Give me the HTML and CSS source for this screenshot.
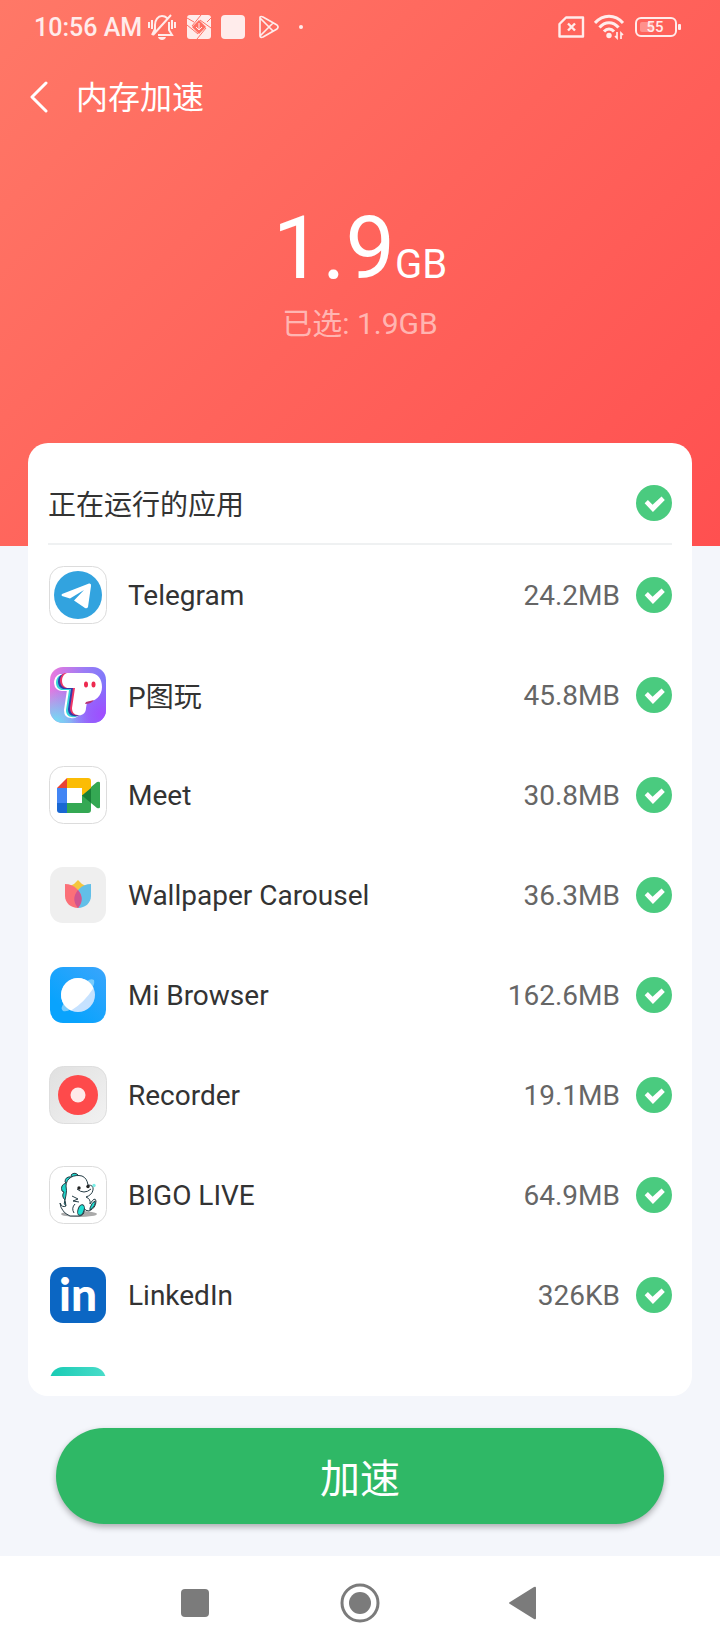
FILE: index.html
```html
<!DOCTYPE html>
<html lang="zh-CN">
<head>
    <meta charset="UTF-8">
    <meta name="viewport" content="width=device-width, initial-scale=1.0">
    <title>内存加速</title>
    <link rel="stylesheet" href="styles.css">
</head>
<body>
    <header class="hero">
        <!-- Status bar -->
        <div class="statusBar">
            <span class="clock">10:56 AM</span>
            <div class="notifications">
                <svg width="30" height="28" viewBox="0 0 30 28" fill="none" stroke="currentColor" stroke-width="2">
                    <path d="M8 19V12C8 7 11 3 15 3C17 3 19 4 20 5M22 9V17L25 22H11M6 22L24 2M8 16L5 22"/>
                    <path d="M2 9V15M5 7V16M25 7V16M28 9V15"/>
                    <path d="M11 24H19C18 28 12 28 11 24Z" fill="currentColor" stroke="none"/>
                </svg>
                <svg width="24" height="24" viewBox="0 0 24 24">
                    <rect width="24" height="24" rx="3" fill="currentColor"/>
                    <path class="cutout" d="M12 5L19 12L12 19L5 12Z"/>
                    <path class="cutoutLine" d="M14 0L5 11M24 13L13 5M10 24L19 13M0 10L11 19M0 3L7 7M24 3L20 7"/>
                    <path d="M12 8V15M9 12L12 15L15 12" fill="none" stroke="currentColor" stroke-width="1"/>
                </svg>
                <svg width="24" height="24" viewBox="0 0 24 24" fill="currentColor"><rect width="24" height="24" rx="4"/></svg>
                <svg width="24" height="24" viewBox="0 0 24 24" fill="none" stroke="currentColor" stroke-width="1.7" stroke-linejoin="round">
                    <path d="M5 2Q6 1 8 2L22 10Q24 12 22 14L8 22Q5 23 5 21ZM5 3L18 16M5 21L18 8M18 8L14 12L18 16"/>
                </svg>
                <svg width="24" height="24" viewBox="0 0 24 24" fill="currentColor"><circle cx="12" cy="12" r="2"/></svg>
            </div>
            <div class="signals">
                <svg width="28" height="24" viewBox="0 0 28 24" fill="none" stroke="currentColor" stroke-width="2.4" stroke-linejoin="round">
                    <path d="M9 2.500H26V21.500H2.500V9ZM11 8.500L18 15.500M18 8.500L11 15.500"/>
                </svg>
                <svg width="32" height="26" viewBox="0 0 32 26" fill="none" stroke="currentColor" stroke-width="3">
                    <path d="M1 9C9 0 21 0 29 9M5.500 13.500C11 7 19 7 24.500 13.500M10 17.500C13 14 17 14 20 17.500"/>
                    <circle cx="15" cy="21.500" r="2.700" fill="currentColor" stroke="none"/>
                    <path d="M23 18V24L21 22M27 25V19L29 21" stroke-width="1.700"/>
                </svg>
                <svg width="46" height="24" viewBox="0 0 46 24">
                    <rect x="1" y="3" width="40" height="18" rx="5" fill="none" stroke="currentColor" stroke-width="2"/>
                    <rect x="5" y="7" width="13" height="10" rx="2" fill="currentColor" opacity=".35"/>
                    <rect x="43" y="9" width="3" height="6" rx="1" fill="currentColor"/>
                    <text class="batteryText" x="20" y="17" text-anchor="middle">55</text>
                </svg>
            </div>
        </div>

        <div class="titleBar">
            <button class="backBtn" aria-label="返回">
                <svg width="20" height="34" viewBox="0 0 20 34" fill="none" stroke="currentColor" stroke-width="3" stroke-linecap="round" stroke-linejoin="round"><path d="M16 3L2 17L16 31"/></svg>
            </button>
            <h1>内存加速</h1>
        </div>

        <div class="total">1.9<span class="unit">GB</span></div>
        <div class="selected">已选: 1.9GB</div>
    </header>

    <main class="card">
        <label class="cardHead">
            <span class="name">正在运行的应用</span>
            <input type="checkbox" class="check" checked>
        </label>

        <ul class="appList">
            <li><label class="app">
                <svg class="appIcon" viewBox="0 0 60 60">
                    <rect class="outline" x="1.500" y="1.500" width="57" height="57" rx="14"/>
                    <circle cx="30" cy="30" r="24" fill="#32a3df"/>
                    <path d="M14 29L41 18.500Q43.500 18 43 21L40 42Q39 44 37 43L26 35.500L36 25L22 33.500L14 31Q13 30 14 29Z" fill="#fff"/>
                </svg>
                <span class="name">Telegram</span>
                <span class="size">24.2MB</span>
                <input type="checkbox" class="check" checked>
            </label></li>
            <li><label class="app">
                <svg class="appIcon" viewBox="0 0 60 60">
                    <defs>
                        <linearGradient id="pFill" x1="0" y1="0" x2="1" y2="0.2"><stop offset="0" stop-color="#ee78dc"/><stop offset="0.6" stop-color="#9b7cf5"/><stop offset="1" stop-color="#7f78fa"/></linearGradient>
                        <radialGradient id="pCyan" cx="0.1" cy="1" r="0.6"><stop offset="0" stop-color="#6fe0f5"/><stop offset="1" stop-color="#6fe0f5" stop-opacity="0"/></radialGradient>
                        <radialGradient id="pViolet" cx="0.95" cy="0.85" r="0.6"><stop offset="0" stop-color="#a14dff"/><stop offset="1" stop-color="#a14dff" stop-opacity="0"/></radialGradient>
                        <path id="pBody" d="M17 8H39C48 8 52 14 52 22C52 30 46 37 37 37L36 43C36 49 31 51 28 50C24 50 22 47 22 43L25 23H20C10 24 10 10 17 8Z"/>
                    </defs>
                    <rect x="2" y="2" width="56" height="56" rx="13" fill="url(#pFill)"/>
                    <rect x="2" y="2" width="56" height="56" rx="13" fill="url(#pCyan)"/>
                    <rect x="2" y="2" width="56" height="56" rx="13" fill="url(#pViolet)"/>
                    <use href="#pBody" x="-5" y="2" fill="#fff" stroke="#fff" stroke-width="2"/>
                    <use href="#pBody" x="-4" y="2" fill="#35d6d9"/>
                    <use href="#pBody" x="-2" y="1" fill="#3439a8"/>
                    <use href="#pBody" fill="#ee3565"/>
                    <use href="#pBody" x="2" fill="#fff"/>
                    <path d="M38 37L46 35Q43 39 37 39Z" fill="#b63377"/>
                    <ellipse cx="38" cy="19.500" rx="2" ry="3" fill="#ed294f"/>
                    <ellipse cx="45.500" cy="19.500" rx="2" ry="3" fill="#ed294f"/>
                </svg>
                <span class="name">P图玩</span>
                <span class="size">45.8MB</span>
                <input type="checkbox" class="check" checked>
            </label></li>
            <li><label class="app">
                <svg class="appIcon" viewBox="0 0 60 60">
                    <rect class="outline" x="1.500" y="1.500" width="57" height="57" rx="14"/>
                    <path d="M9 23L19 13V23Z" fill="#e94335"/>
                    <path d="M19 13H40Q43 13 43 16V31H34V23H19Z" fill="#fbbc05"/>
                    <path d="M9 23H19V38H9Z" fill="#4285f4"/>
                    <path d="M9 38H19V48H12Q9 48 9 45Z" fill="#1967d2"/>
                    <path d="M19 38H34V30H43V45Q43 48 40 48H19ZM43 22L49 17Q52 16 52 18V42Q52 44 49 43L43 38Z" fill="#34a853"/>
                    <path d="M34 30.500L43 23V38Z" fill="#188038"/>
                </svg>
                <span class="name">Meet</span>
                <span class="size">30.8MB</span>
                <input type="checkbox" class="check" checked>
            </label></li>
            <li><label class="app">
                <svg class="appIcon" viewBox="0 0 60 60">
                    <rect x="2" y="2" width="56" height="56" rx="13" fill="#efefef"/>
                    <path d="M22 21Q27 19 30 15Q33 19 38 21L30 29Z" fill="#f4c63c"/>
                    <path d="M43 19V31C43 38 37 43 30 43C25 36 26 29 31 24Q36 19 43 19Z" fill="#62bfe8"/>
                    <path d="M17 19V31C17 38 23 43 30 43C35 36 34 29 29 24Q24 19 17 19Z" fill="#fb7078"/>
                    <path d="M30 25C25 31 25 37 30 43C35 37 35 31 30 25Z" fill="#d05590"/>
                </svg>
                <span class="name">Wallpaper Carousel</span>
                <span class="size">36.3MB</span>
                <input type="checkbox" class="check" checked>
            </label></li>
            <li><label class="app">
                <svg class="appIcon" viewBox="0 0 60 60">
                    <defs><linearGradient id="browserFill" x1="1" y1="0" x2="0.3" y2="0.8"><stop offset="0" stop-color="#3aa5fc"/><stop offset="1" stop-color="#09a3fd"/></linearGradient></defs>
                    <rect x="2" y="2" width="56" height="56" rx="13" fill="url(#browserFill)"/>
                    <path d="M39 16Q43 13 46 15Q47 19 44 23ZM16 38Q12 43 15 46Q19 47 23 44Z" fill="#79ccfd"/>
                    <circle cx="30" cy="30" r="17" fill="#c6e2ff"/>
                    <path d="M23 45.500A17 17 0 1 1 45.500 23Q36 38 23 45.500Z" fill="#fff"/>
                </svg>
                <span class="name">Mi Browser</span>
                <span class="size">162.6MB</span>
                <input type="checkbox" class="check" checked>
            </label></li>
            <li><label class="app">
                <svg class="appIcon" viewBox="0 0 60 60">
                    <defs><linearGradient id="recFill" x1="0" y1="0" x2="1" y2="1"><stop offset="0" stop-color="#e0e0e0"/><stop offset="1" stop-color="#f2f2f2"/></linearGradient></defs>
                    <rect x="1.500" y="1.500" width="57" height="57" rx="14" fill="url(#recFill)" stroke="#dedede"/>
                    <circle cx="30" cy="30" r="20" fill="#fe4a4b"/>
                    <circle cx="30" cy="30" r="7.500" fill="#ffe9e9"/>
                </svg>
                <span class="name">Recorder</span>
                <span class="size">19.1MB</span>
                <input type="checkbox" class="check" checked>
            </label></li>
            <li><label class="app">
                <svg class="appIcon" viewBox="0 0 60 60">
                    <rect class="outline" x="1.500" y="1.500" width="57" height="57" rx="14"/>
                    <ellipse cx="31" cy="49" rx="18" ry="3" fill="#aaa"/>
                    <g stroke="#263d46" stroke-width="1">
                        <path d="M31 11Q27 6 23 10L24 12Q17 11 17 17L18 18Q12 20 14 26L16 27Q13 31 17 35Q15 39 18 41L22 30L21 18Z" fill="#1fd3c8"/>
                        <path d="M12 38Q14 43 18 41Q16 35 18 30Q19 26 18 21C18 13 26 9 34 11Q39 13 40 20Q46 20 45 25Q44 30 38 32Q43 34 42 39Q47 31 48 36Q48 43 41 46Q37 46 36 43Q37 51 31 51H22Q13 47 12 38Z" fill="#fff"/>
                        <path d="M29 24Q36 30 43 24M24 31L30 34L25 36L31 37M26 48Q23 43 27 39" fill="none"/>
                        <ellipse cx="33" cy="45" rx="3" ry="5.500" transform="rotate(18 33 45)" fill="#1fe0d4"/>
                        <path d="M42 43Q44 37 47 36Q48 41 42 45Z" fill="#1fe0d4"/>
                    </g>
                    <circle cx="31" cy="23" r="1.700" fill="#222"/>
                    <circle cx="40" cy="21.500" r="1.700" fill="#222"/>
                    <circle cx="46" cy="20.500" r="1.700" fill="#79eee7"/>
                </svg>
                <span class="name">BIGO LIVE</span>
                <span class="size">64.9MB</span>
                <input type="checkbox" class="check" checked>
            </label></li>
            <li><label class="app">
                <svg class="appIcon" viewBox="0 0 60 60">
                    <rect x="2" y="2" width="56" height="56" rx="13" fill="#0b66c3"/>
                    <text class="linkedinText" x="30" y="46" text-anchor="middle">in</text>
                </svg>
                <span class="name">LinkedIn</span>
                <span class="size">326KB</span>
                <input type="checkbox" class="check" checked>
            </label></li>
            <li><div class="app">
                <svg class="appIcon" viewBox="0 0 60 60">
                    <defs><linearGradient id="nextFill"><stop offset="0" stop-color="#18cbb4"/><stop offset="1" stop-color="#49dcc9"/></linearGradient></defs>
                    <rect x="2" y="2" width="56" height="56" rx="13" fill="url(#nextFill)"/>
                </svg>
            </div></li>
        </ul>
    </main>

    <button class="boostBtn">加速</button>

    <!-- System navigation -->
    <nav class="navBar">
        <button aria-label="最近任务"><svg width="40" height="40" viewBox="0 0 40 40" fill="currentColor"><rect x="6" y="6" width="28" height="28" rx="4"/></svg></button>
        <button aria-label="主页"><svg width="40" height="40" viewBox="0 0 40 40" fill="currentColor"><circle cx="20" cy="20" r="18" fill="none" stroke="currentColor" stroke-width="3"/><circle cx="20" cy="20" r="11"/></svg></button>
        <button aria-label="返回"><svg width="40" height="40" viewBox="0 0 40 40" fill="currentColor"><path d="M5 19L29 4Q31 3 31 5V35Q31 37 29 36L5 21Q3 20 5 19Z"/></svg></button>
    </nav>
</body>
</html>
```
FILE: styles.css
```css
* {
    box-sizing: border-box;
}

body {
    margin: 0;
    height: 100vh;
    display: flex;
    flex-direction: column;
    background-color: #f4f6fb;
    font-family: Roboto, "Noto Sans CJK SC", sans-serif;
    color: #333;
}

button {
    border: none;
    padding: 0;
    background: none;
    color: inherit;
    font-family: inherit;
    cursor: pointer;
}

svg {
    display: block;
    flex: none;
}

/* Red top area, the card overlaps its lower part */
.hero {
    flex: none;
    padding-bottom: 202px;
    background: linear-gradient(135deg, #ff7867 0%, #ff635b 50%, #ff5050 100%);
    color: white;
    text-align: center;
}

.statusBar {
    display: flex;
    align-items: center;
    height: 54px;
    padding: 0 39px 0 34px;
    color: #ffeceb;
}

.clock {
    font-size: 25px;
    font-weight: 500;
}

.notifications {
    display: flex;
    align-items: center;
    gap: 10px;
    margin-left: 5px;
}

.cutout {
    fill: #ff6f63;
}

.cutoutLine {
    fill: none;
    stroke: #ff6f63;
    stroke-width: 1px;
}

.signals {
    display: flex;
    align-items: center;
    gap: 9px;
    margin-left: auto;
}

.batteryText {
    font-size: 15px;
    font-weight: 500;
    fill: currentColor;
}

.titleBar {
    display: flex;
    align-items: center;
    height: 86px;
    padding: 0 30px;
    gap: 26px;
}

h1 {
    margin: 0;
    padding-bottom: 4px;
    font-size: 32px;
    font-weight: 400;
}

.total {
    margin-top: 58px;
    font-size: 88px;
    line-height: 100px;
}

.unit {
    font-size: 40px;
    line-height: 40px;
}

.selected {
    margin-top: 6px;
    font-size: 30px;
    line-height: 40px;
    color: rgba(255, 255, 255, 0.55);
}

/* White card with the running apps */
.card {
    flex: 1;
    min-height: 0;
    display: flex;
    flex-direction: column;
    margin: -103px 28px 0;
    padding: 20px;
    border-radius: 20px;
    background-color: white;
    font-size: 28px;
}

.cardHead {
    flex: none;
    display: flex;
    align-items: center;
    height: 82px;
    border-bottom: 2px solid #eff1f2;
}

.appList {
    flex: 1;
    min-height: 0;
    margin: 0;
    padding: 0;
    list-style: none;
    overflow: hidden;
}

.app {
    display: flex;
    align-items: center;
    height: 100px;
}

.appIcon {
    width: 60px;
    height: 60px;
    margin-right: 20px;
}

.outline {
    fill: white;
    stroke: #dcdcdc;
}

.linkedinText {
    font-family: Lato, sans-serif;
    font-size: 46px;
    font-weight: 900;
    fill: white;
}

.name {
    flex: 1;
}

.size {
    margin-right: 16px;
    color: #666;
}

.check {
    appearance: none;
    flex: none;
    width: 36px;
    height: 36px;
    margin: 0;
    border-radius: 50%;
    background-color: #ccc;
    cursor: pointer;
}

.check:checked {
    background-color: #4acb7f;
}

.check:checked::before {
    content: "";
    display: block;
    height: 36px;
    background-color: white;
    clip-path: polygon(24% 51%, 33% 42%, 46% 55%, 71% 32%, 80% 42%, 47% 75%);
}

.boostBtn {
    flex: none;
    height: 96px;
    margin: 32px 56px;
    border-radius: 48px;
    background-color: #2fb866;
    box-shadow: 0 3px 6px rgba(0, 0, 0, 0.3);
    color: white;
    font-size: 40px;
}

.navBar {
    flex: none;
    display: flex;
    align-items: center;
    justify-content: center;
    gap: 125px;
    height: 94px;
    background-color: white;
    color: #7b7b7b;
}
```
